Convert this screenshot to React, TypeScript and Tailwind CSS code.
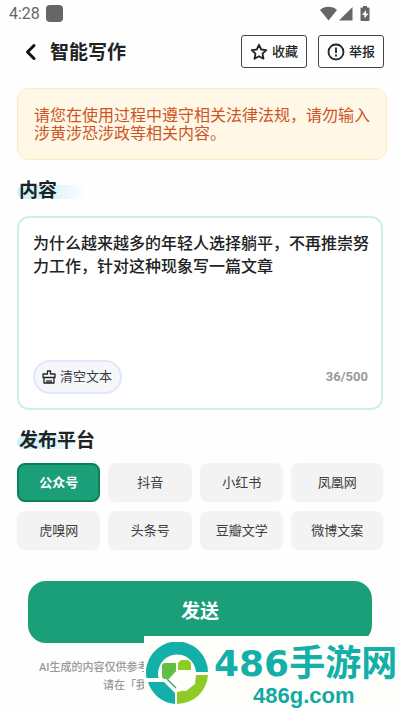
import { useState } from 'react'
import clsx from 'clsx'

const PLATFORMS = ['公众号', '抖音', '小红书', '凤凰网', '虎嗅网', '头条号', '豆瓣文学', '微博文案']

const MAX_LENGTH = 500

export default function App() {
  const [content, setContent] = useState('为什么越来越多的年轻人选择躺平，不再推崇努力工作，针对这种现象写一篇文章')
  const [count, setCount] = useState(36)
  const [platform, setPlatform] = useState('公众号')

  const updateContent = (value: string) => {
    setContent(value)
    setCount(value.length)
  }

  return (
    <div className="relative min-h-screen overflow-hidden bg-[#fefefe] font-['Roboto','Noto_Sans_CJK_SC',sans-serif] text-[#202322]">
      <StatusBar />

      <header className="flex items-center pt-2 pr-4 pl-6">
        <button aria-label="返回" className="mr-3 flex h-8 w-[14px] items-center justify-center">
          <svg viewBox="0 0 14 20" className="h-5 w-[14px]" fill="none" stroke="#111" strokeWidth="3" strokeLinecap="round" strokeLinejoin="round">
            <path d="M10 3.5 3.5 10l6.500 6.500" />
          </svg>
        </button>
        <h1 className="flex-1 pt-[2px] text-[19px] leading-6 font-bold">智能写作</h1>
        <div className="flex gap-[11px]">
          <HeaderButton label="收藏">
            <path d="m9 1.800 2.200 4.700 5.100.6-3.800 3.500 1 5.100L9 13.200l-4.500 2.500 1-5.100L1.700 7.100l5.100-.6Z" />
          </HeaderButton>
          <HeaderButton label="举报">
            <circle cx="9" cy="9" r="7.500" />
            <path d="M9 4.500v5.500M9 11.500v2" />
          </HeaderButton>
        </div>
      </header>

      <main>
        <p className="mt-5 mr-[13px] ml-[17px] rounded-xl border border-[#faebbc] bg-[#fff8e6] pt-[18px] pr-3 pb-4 pl-4 text-[16px] leading-[18px] text-[#cd5427]">
          请您在使用过程中遵守相关法律法规，请勿输入涉黄涉恐涉政等相关内容。
        </p>

        <div className="px-[17px]">
          <SectionTitle id="content-title">内容</SectionTitle>
          <section className="mt-[13px] rounded-xl border-2 border-[#cdf1e5] bg-white p-[14px] pr-[13px]">
            <textarea
              aria-labelledby="content-title"
              value={content}
              maxLength={MAX_LENGTH}
              onChange={(e) => updateContent(e.target.value)}
              className="block h-32 w-[calc(100%+12px)] resize-none overflow-hidden bg-transparent text-[16px] leading-[23px] font-medium outline-none"
            />
            <div className="flex items-center justify-between">
              <button
                onClick={() => updateContent('')}
                className="flex h-[34px] items-center gap-1 rounded-full border-2 border-[#e3e7fb] bg-[#f6f7fb] pr-2 pl-[7px] text-[13px] text-[#3b3d3f]"
              >
                <BrushIcon />
                清空文本
              </button>
              <span className="text-[13px] font-bold text-[#999]">
                {count}/{MAX_LENGTH}
              </span>
            </div>
          </section>

          <SectionTitle>发布平台</SectionTitle>
          <div className="mt-[10px] grid grid-cols-[83fr_83fr_83fr_91fr] gap-x-2 gap-y-[9px]">
            {PLATFORMS.map((name) => (
              <button
                key={name}
                aria-pressed={name === platform}
                onClick={() => setPlatform(name)}
                className={clsx(
                  'h-[39px] rounded-lg text-[13px]',
                  name === platform
                    ? 'border-2 border-[#0f7f58] bg-[#1b9f78] font-bold text-white'
                    : 'bg-[#f3f3f3] text-[#3b3d3f]',
                )}
              >
                {name}
              </button>
            ))}
          </div>
        </div>

        <div className="mt-[31px] px-7">
          <button className="h-[62px] w-full rounded-[18px] bg-[#1b9f78] text-[19px] font-bold text-white">发送</button>
        </div>

        <div className="mt-4 pb-4 text-[11px] leading-[18px] font-medium text-[#999]">
          <p className="pl-[39px]">AI生成的内容仅供参考</p>
          <p className="pl-[103px]">请在「我</p>
        </div>
      </main>

      <Watermark />
    </div>
  )
}

function StatusBar() {
  return (
    <div className="flex h-[27px] items-center pr-[30px] pl-[9px] text-[#666]">
      <span className="text-[16px] leading-[27px]">4:28</span>
      <span className="ml-[6px] h-[17px] w-[17px] rounded-[4px] bg-[#666]" />
      <svg viewBox="0 0 50 16" className="ml-auto h-4 w-[50px] fill-current">
        <path d="M0 4C4.500-.2 12.500-.2 17 4L8.500 14.500Z" />
        <path d="M32.500 1v13.500H19Z" />
        <path
          fillRule="evenodd"
          d="M43 0h4v1.500h1.500q1 0 1 1V14q0 1-1 1h-7q-1 0-1-1V2.500q0-1 1-1H43ZM46 4l-4 5h2.500v3.500L48.500 7.500H46Z"
        />
      </svg>
    </div>
  )
}

function HeaderButton({ label, children }: { label: string; children: React.ReactNode }) {
  return (
    <button className="flex h-[33px] w-[66px] items-center justify-center gap-1 rounded-[3px] border border-[#444] text-[13px] font-medium">
      <svg viewBox="0 0 18 18" className="h-[18px] w-[18px]" fill="none" stroke="#202322" strokeWidth="1.800" strokeLinejoin="round">
        {children}
      </svg>
      {label}
    </button>
  )
}

function SectionTitle({ id, children }: { id?: string; children: React.ReactNode }) {
  return (
    <div className="relative mt-[19px] flex h-6 items-center">
      <span className="absolute top-[6px] left-0 h-[14px] w-[70px] rounded-full bg-linear-to-r from-[#c9f3fb] via-[#d8f7fd] to-[#fefefe]" />
      <h2 id={id} className="relative pl-[2px] text-[19px] leading-6 font-bold">
        {children}
      </h2>
    </div>
  )
}

function BrushIcon() {
  return (
    <svg viewBox="0 0 14 14" className="h-[14px] w-[14px]" fill="none" stroke="#202322" strokeWidth="1.300" strokeLinejoin="round">
      <path d="M5.500 4V1h3v3H13v3.500H1V4Z" />
      <path d="M2 7.500V13h10V7.500M5 10v3M7 10v3M9 10v3" />
    </svg>
  )
}

function Watermark() {
  return (
    <div className="absolute right-0 bottom-0 flex h-[75px] w-64 bg-[#fefffb]">
      <svg viewBox="0 0 62 62" className="mt-[6px] ml-[2px] h-[62px] w-[62px] shrink-0">
        <path d="M.5 36A31 31 0 1 1 62 30H50A19 19 0 1 0 12.600 36Z" fill="#13afa8" />
        <path d="M2 40H18L29 51V62A31 31 0 0 1 2 40Z" fill="#13afa8" />
        <path d="M62 33A31 31 0 0 1 31 62V50Q46 48 50 33Z" fill="#8dcc27" />
        <path d="M16 24q0-3 3-3h11v10l-7 6h-4q-3 0-3-3Z" fill="#62bf45" />
        <path d="m32 21 3-3h7l3 3v8H32Z" fill="#8dcc27" />
        <path d="m31 28h14l5 5-1 9-9 7-9-1-8-11Z" fill="#fefffb" />
        <path d="m21 37 9 9" stroke="#35b477" strokeWidth="1.500" />
      </svg>
      <div className="flex flex-1 flex-col pl-[6px] whitespace-nowrap">
        <span className="mt-[10px] font-['DejaVu_Sans','Noto_Sans_CJK_SC',sans-serif] text-[36px] leading-9 font-bold text-[#13afa8]">
          486手游网
        </span>
        <span className="mt-1 pl-[39px] font-['Liberation_Sans',sans-serif] text-[22px] leading-5 font-bold text-[#13a9a3]">486g.com</span>
      </div>
    </div>
  )
}
